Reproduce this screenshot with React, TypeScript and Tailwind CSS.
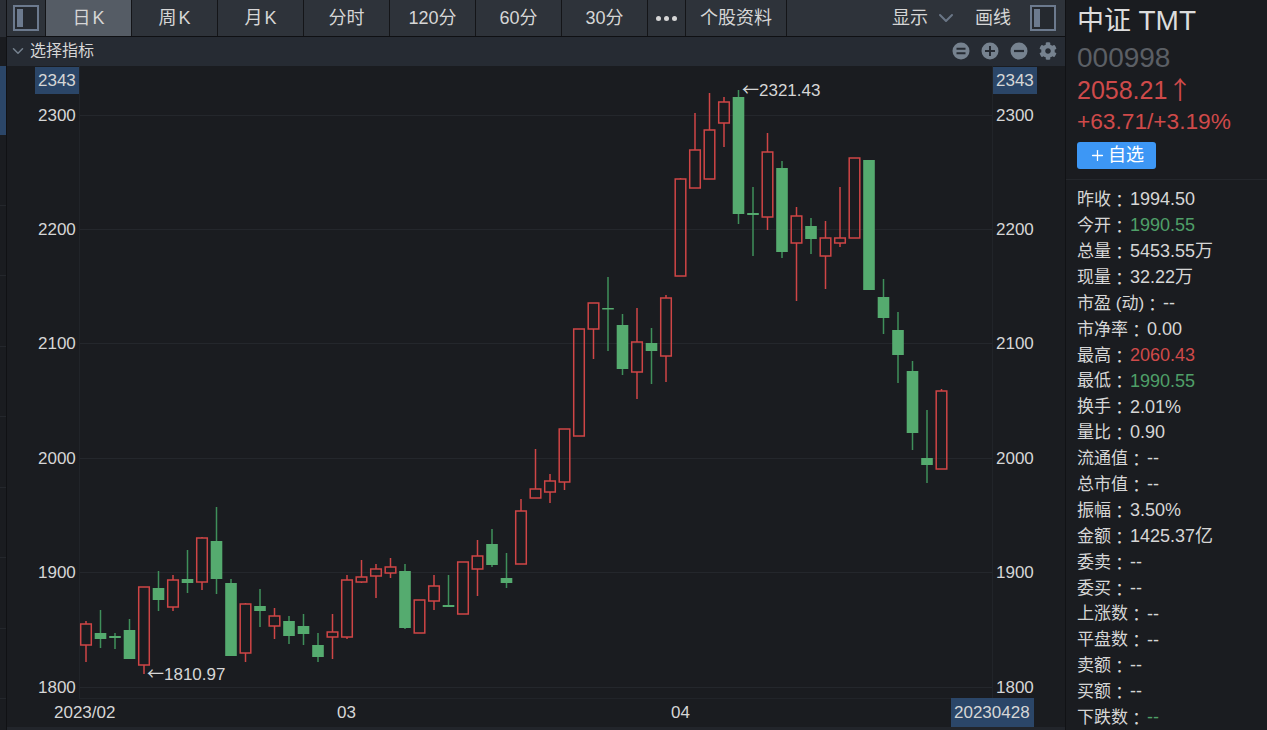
import { ChevronDown, Plus } from "lucide-react";
import { FaCog } from "react-icons/fa";

const fontClass = "font-['Liberation_Sans','Noto_Sans_CJK_SC',sans-serif]";
const arrowFont = "font-['Noto_Sans_CJK_SC',sans-serif]";

// [wick top, wick bottom, body top, body bottom, up?] in page pixels
const candles: [number, number, number, number, boolean][] = [
  [621, 662, 624, 645, true],
  [610, 648, 633, 639, false],
  [633, 649, 636, 638, false],
  [619, 659, 630, 659, false],
  [587, 674, 587, 665, true],
  [571, 611, 588, 600, false],
  [575, 611, 580, 607, true],
  [550, 593, 579, 583, false],
  [537, 590, 538, 582, true],
  [507, 594, 541, 579, false],
  [579, 656, 583, 656, false],
  [603, 662, 604, 653, true],
  [589, 627, 606, 611, false],
  [608, 639, 616, 626, true],
  [616, 644, 621, 636, false],
  [614, 645, 626, 634, false],
  [633, 662, 645, 657, false],
  [614, 659, 632, 637, true],
  [575, 639, 580, 637, true],
  [560, 583, 577, 582, true],
  [564, 598, 569, 576, true],
  [558, 578, 567, 573, true],
  [564, 629, 571, 628, false],
  [600, 633, 600, 633, true],
  [575, 610, 586, 601, true],
  [575, 607, 605, 607, false],
  [562, 614, 562, 614, true],
  [540, 596, 556, 569, true],
  [529, 567, 544, 565, false],
  [553, 588, 578, 583, false],
  [499, 564, 511, 564, true],
  [449, 498, 489, 498, true],
  [474, 503, 481, 492, true],
  [429, 490, 429, 482, true],
  [329, 436, 329, 436, true],
  [303, 359, 303, 329, true],
  [277, 351, 308, 309, false],
  [314, 375, 325, 369, false],
  [308, 399, 342, 372, true],
  [328, 384, 343, 351, false],
  [295, 382, 298, 356, true],
  [178, 276, 179, 276, true],
  [113, 188, 150, 188, true],
  [93, 179, 130, 179, true],
  [97, 147, 102, 123, true],
  [90, 224, 97, 214, false],
  [187, 256, 213, 215, false],
  [133, 230, 152, 217, true],
  [161, 258, 168, 252, false],
  [207, 301, 216, 243, true],
  [218, 254, 226, 239, false],
  [221, 289, 238, 256, true],
  [187, 247, 238, 243, true],
  [158, 238, 158, 238, true],
  [160, 290, 160, 290, false],
  [279, 334, 297, 318, false],
  [312, 383, 330, 355, false],
  [361, 450, 371, 433, false],
  [410, 483, 458, 465, false],
  [389, 469, 391, 469, true],
];

const ticks: [string, number][] = [
  ["2300", 115],
  ["2200", 229],
  ["2100", 343],
  ["2000", 458],
  ["1900", 572],
  ["1800", 687],
];

const tabs = ["日 K", "周 K", "月 K", "分时", "120分", "60分", "30分"];

const RED = "text-[#cf4a4a]";
const GREEN = "text-[#4f9f68]";

const quotes: [string, string, string?][] = [
  ["昨收", "1994.50"],
  ["今开", "1990.55", GREEN],
  ["总量", "5453.55万"],
  ["现量", "32.22万"],
  ["市盈 (动)", "--"],
  ["市净率", "0.00"],
  ["最高", "2060.43", RED],
  ["最低", "1990.55", GREEN],
  ["换手", "2.01%"],
  ["量比", "0.90"],
  ["流通值", "--"],
  ["总市值", "--"],
  ["振幅", "3.50%"],
  ["金额", "1425.37亿"],
  ["委卖", "--"],
  ["委买", "--"],
  ["上涨数", "--"],
  ["平盘数", "--"],
  ["卖额", "--"],
  ["买额", "--"],
  ["下跌数", "--", GREEN],
];

function PanelIcon() {
  return (
    <svg width="26" height="26" viewBox="0 0 26 26">
      <rect x="1" y="1" width="24" height="24" fill="#25292f" stroke="#6c7a8e" strokeWidth="2" />
      <rect x="4" y="4" width="6" height="18" fill="#6c7a8e" />
    </svg>
  );
}

function RoundIcon({ kind }: { kind: "equal" | "plus" | "minus" }) {
  return (
    <svg width="18" height="18" viewBox="0 0 18 18">
      <circle cx="9" cy="9" r="8.5" fill="#76828f" />
      {kind === "equal" && <path d="M4.5 6.8h9M4.5 11.2h9" stroke="#262b33" strokeWidth="2" />}
      {kind === "plus" && <path d="M4 9h10M9 4v10" stroke="#262b33" strokeWidth="2" />}
      {kind === "minus" && <path d="M4 9h10" stroke="#262b33" strokeWidth="2.2" />}
    </svg>
  );
}

function Chart() {
  const label = "fill-[#d6d6d6] text-[17px]";
  return (
    <svg viewBox="7 66 1058 661" className={`block h-full w-full ${fontClass}`}>
      {ticks.map(([, y]) => (
        <line key={y} x1="79" x2="993" y1={y + 0.5} y2={y + 0.5} stroke="#24272c" />
      ))}
      <line x1="79.5" x2="79.5" y1="66" y2="698" stroke="#212429" />
      <line x1="992.5" x2="992.5" y1="66" y2="698" stroke="#212429" />
      <line x1="79" x2="993" y1="698.5" y2="698.5" stroke="#212429" />

      {candles.map(([high, low, top, bottom, up], i) => {
        const x = 86 + i * 14.5;
        if (up) {
          return (
            <g key={i} stroke="#cf4546" strokeWidth="1.5" fill="none">
              {high < top && <line x1={x} x2={x} y1={high} y2={top} />}
              {low > bottom && <line x1={x} x2={x} y1={bottom} y2={low} />}
              <rect x={x - 5.3} y={top} width="10.6" height={bottom - top} />
            </g>
          );
        }
        return (
          <g key={i}>
            <line x1={x} x2={x} y1={high} y2={low} stroke="#3f8f5a" strokeWidth="1.5" />
            <rect x={x - 5.8} y={top} width="11.6" height={Math.max(bottom - top, 1.5)} fill="#55ab6f" />
          </g>
        );
      })}

      <rect x="35" y="67" width="44" height="27" fill="#2b4668" />
      <rect x="993" y="67" width="44" height="27" fill="#2b4668" />
      <text x="38" y="86" className={label}>2343</text>
      <text x="996" y="86" className={label}>2343</text>
      {ticks.map(([text, y]) => (
        <g key={text}>
          <text x="38" y={y + 6} className={label}>{text}</text>
          <text x="996" y={y + 6} className={label}>{text}</text>
        </g>
      ))}

      <text x="742" y="96" className={label}>
        <tspan className={arrowFont}>←</tspan>2321.43
      </text>
      <text x="147" y="680" className={label}>
        <tspan className={arrowFont}>←</tspan>1810.97
      </text>

      <text x="54" y="718" className={label}>2023/02</text>
      <text x="337" y="718" className={label}>03</text>
      <text x="671" y="718" className={label}>04</text>
      <rect x="951" y="698" width="83" height="29" fill="#2b4668" />
      <text x="954" y="718" className={label}>20230428</text>
    </svg>
  );
}

export default function App() {
  return (
    <div className={`flex h-[730px] w-[1267px] overflow-hidden bg-[#1a1c20] text-[#d6d6d6] ${fontClass}`}>
      {/* narrow rail on the left edge */}
      <div className="flex w-[7px] shrink-0 flex-col border-r border-[#101114] bg-[#1a1c20]">
        <div className="h-[37px] bg-[#2a2e35]" />
        <div className="h-[29px]" />
        <div className="h-[69px] bg-[#2b4668]" />
        {[0, 1, 2, 3, 4, 5, 6, 7].map((row) => (
          <div key={row} className="h-[70.5px] border-b border-[#24272c]" />
        ))}
      </div>

      <div className="flex min-w-0 flex-1 flex-col border-r border-[#111215]">
        <div className="flex h-[37px] shrink-0 items-stretch border-b border-[#0f1013] bg-[#2e333a] text-[18px]">
          <div className="flex w-[39px] items-center justify-center border-r border-[#141518]">
            <PanelIcon />
          </div>
          {tabs.map((tab, i) => (
            <div
              key={tab}
              className={`flex w-[86px] items-center justify-center border-r border-[#141518] [word-spacing:-3px] ${i === 0 ? "bg-[#555c65]" : ""}`}
            >
              {tab}
            </div>
          ))}
          <div className="flex w-[38px] items-center justify-center gap-[3px] border-r border-[#141518]">
            <span className="size-[5px] rounded-full bg-[#d6d6d6]" />
            <span className="size-[5px] rounded-full bg-[#d6d6d6]" />
            <span className="size-[5px] rounded-full bg-[#d6d6d6]" />
          </div>
          <div className="flex w-[101px] items-center justify-center border-r border-[#141518]">个股资料</div>
          <div className="flex flex-1 items-center justify-end pr-[9px]">
            <span>显示</span>
            <ChevronDown size={24} strokeWidth={2} className="ml-[6px] text-[#6a7686]" />
            <span className="ml-[17px]">画线</span>
            <span className="ml-[19px] flex">
              <PanelIcon />
            </span>
          </div>
        </div>

        <div className="flex h-[29px] shrink-0 items-center bg-[#262b33] pr-[8px] pb-[2px] pl-[2px] text-[16px]">
          <ChevronDown size={18} strokeWidth={2} className="text-[#76828f]" />
          <span className="ml-[3px]">选择指标</span>
          <div className="ml-auto flex items-center gap-[11px]">
            <RoundIcon kind="equal" />
            <RoundIcon kind="plus" />
            <RoundIcon kind="minus" />
            <FaCog size={18} className="text-[#76828f]" />
          </div>
        </div>

        <div className="min-h-0 flex-1">
          <Chart />
        </div>
        <div className="h-[3px] shrink-0 bg-[#22252b]" />
      </div>

      {/* quote panel */}
      <div className="flex w-[201px] shrink-0 flex-col">
        <div className="flex h-[180px] shrink-0 flex-col border-b border-[#24272c] pl-[11px]">
          <div className="mt-[3px] h-[35px] text-[27px] leading-[35px] text-[#dcdcdc]">
            中证 <span className="text-[28px]">TMT</span>
          </div>
          <div className="mt-[3px] h-[33px] text-[28px] leading-[33px] text-[#5b5f65]">000998</div>
          <div className="-mt-[1px] h-[33px] text-[25px] leading-[30px] text-[#cf4a4a]">
            2058.21<span className={arrowFont}>↑</span>
          </div>
          <div className="h-[32px] text-[22.7px] leading-[30px] text-[#cf4a4a]">+63.71/+3.19%</div>
          <div className="mt-[4px] flex h-[27px] w-[79px] items-center justify-center gap-[2px] rounded-[3px] bg-[#3d97f5] text-[18px] text-white">
            <Plus size={17} strokeWidth={1.8} />
            自选
          </div>
        </div>
        <div className="pt-[7px] pl-[11px]">
          {quotes.map(([name, value, color]) => (
            <div key={name} className="flex h-[25.9px] items-center whitespace-nowrap">
              <span className="text-[17px]">{name}</span>
              <span className="font-['Noto_Sans_CJK_TC',sans-serif] text-[17px]">{"\uFF1A"}</span>
              <span className={`ml-[2px] text-[18px] ${color ?? ""}`}>{value}</span>
            </div>
          ))}
        </div>
      </div>
    </div>
  );
}
